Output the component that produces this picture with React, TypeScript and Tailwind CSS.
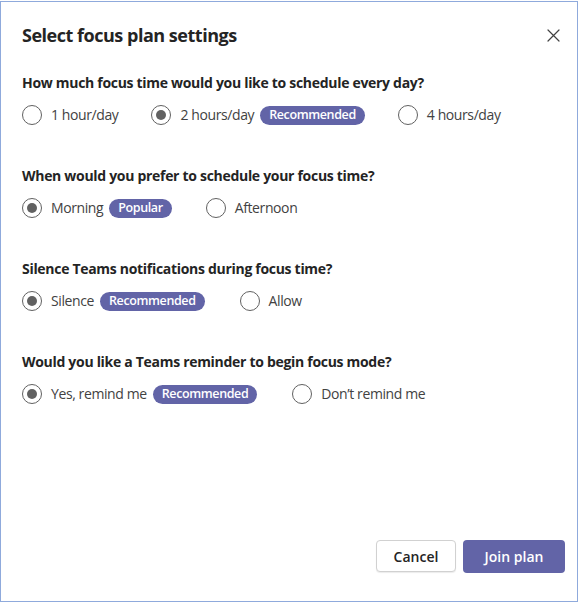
import { useState } from "react";

type Option = { label: string; badge?: string };

type Question = {
  title: string;
  options: Option[];
  gapClass: string;
  mt: string;
};

const questions: Question[] = [
  {
    title: "How much focus time would you like to schedule every day?",
    options: [{ label: "1 hour/day" }, { label: "2 hours/day", badge: "Recommended" }, { label: "4 hours/day" }],
    gapClass: "gap-[33px]",
    mt: "mt-[26px]",
  },
  {
    title: "When would you prefer to schedule your focus time?",
    options: [{ label: "Morning", badge: "Popular" }, { label: "Afternoon" }],
    gapClass: "gap-[34px]",
    mt: "mt-[39px]",
  },
  {
    title: "Silence Teams notifications during focus time?",
    options: [{ label: "Silence", badge: "Recommended" }, { label: "Allow" }],
    gapClass: "gap-[35px]",
    mt: "mt-[39px]",
  },
  {
    title: "Would you like a Teams reminder to begin focus mode?",
    options: [{ label: "Yes, remind me", badge: "Recommended" }, { label: "Don\u2019t remind me" }],
    gapClass: "gap-[35px]",
    mt: "mt-[39px]",
  },
];

function Radio({ checked }: { checked: boolean }) {
  return (
    <span className="flex h-[20px] w-[20px] shrink-0 items-center justify-center rounded-full border-[1.5px] border-[#616161] bg-white">
      {checked ? <span className="h-[10px] w-[10px] rounded-full bg-[#616161]" /> : null}
    </span>
  );
}

function Badge({ text }: { text: string }) {
  return (
    <span className="ml-[6px] flex h-[19px] items-center rounded-full bg-[#6264a7] px-[9px] text-[12.5px] font-semibold leading-none tracking-[-0.38px] text-white">
      {text}
    </span>
  );
}

export default function App() {
  const [answers, setAnswers] = useState<number[]>([1, 0, 0, 0]);

  return (
    <div
      className="mt-px flex h-[601px] w-[578px] flex-col border border-[#8faadc] bg-white pl-[21px] pr-[12px] pt-[21px] pb-[28px] text-[#242424]"
      style={{ fontFamily: '"Open Sans", "Noto Sans", sans-serif' }}
    >
      <div className="flex h-[24px] items-center justify-between">
        <h1 className="text-[18px] font-bold leading-[24px] tracking-[-0.48px]">Select focus plan settings</h1>
        <button type="button" className="flex h-[24px] w-[24px] items-center justify-center">
          <svg width="13" height="13" viewBox="0 0 13 13" fill="none">
            <path d="M1 1L12 12M12 1L1 12" stroke="#424242" strokeWidth="1.2" strokeLinecap="round" />
          </svg>
        </button>
      </div>

      {questions.map((q, qi) => (
        <section key={q.title} className={q.mt}>
          <h2 className="text-[14px] font-bold leading-[20px] tracking-[-0.3px]">{q.title}</h2>
          <div className={`mt-[10px] flex h-[24px] items-center ${q.gapClass}`}>
            {q.options.map((o, oi) => (
              <label
                key={o.label}
                className="flex cursor-pointer items-center"
                onClick={() => setAnswers(answers.map((a, i) => (i === qi ? oi : a)))}
              >
                <Radio checked={answers[qi] === oi} />
                <span className="ml-[9px] text-[14px] leading-[20px] tracking-[-0.4px] text-[#424242]">{o.label}</span>
                {o.badge ? <Badge text={o.badge} /> : null}
              </label>
            ))}
          </div>
        </section>
      ))}

      <div className="mt-auto flex justify-end gap-[7px]">
        <button
          type="button"
          className="h-[32px] w-[80px] rounded-[4px] border border-[#d1d1d1] bg-white text-[14px] font-semibold text-[#242424] shadow-[0_1px_1px_rgba(0,0,0,0.08)]"
        >
          Cancel
        </button>
        <button
          type="button"
          className="h-[33px] w-[102px] rounded-[4px] bg-[#6264a7] text-[14px] font-semibold text-white"
        >
          Join plan
        </button>
      </div>
    </div>
  );
}
